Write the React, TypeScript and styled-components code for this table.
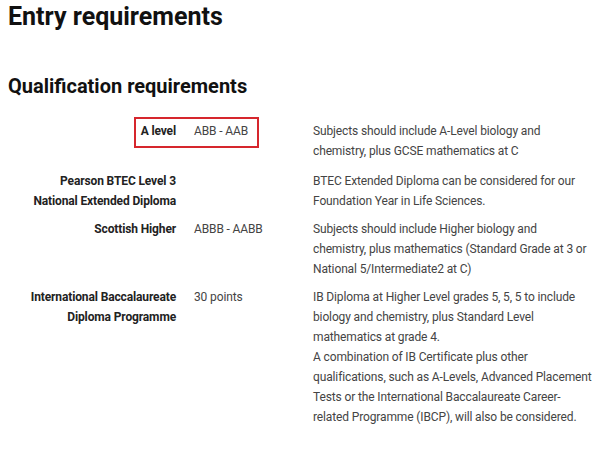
import React from "react";
import styled, { createGlobalStyle } from "styled-components";

const Global = createGlobalStyle`
  html, body { margin: 0; padding: 0; background: #fff; }
  body { font-family: Roboto, "Liberation Sans", Arial, sans-serif; color: #222; }
`;

const Page = styled.div`
  padding: 0 8px;
`;

const Title = styled.h1`
  margin: 0;
  padding-top: 3px;
  font-size: 25px;
  line-height: 28px;
  font-weight: 700;
  color: #111;
`;

const SubTitle = styled.h2`
  margin: 43px 0 0;
  font-size: 20px;
  line-height: 24px;
  font-weight: 700;
  color: #111;
`;

const Table = styled.div`
  margin-top: 23px;
  display: flex;
  flex-direction: column;
  gap: 8px;
  font-size: 12px;
  line-height: 20px;
  letter-spacing: -0.13px;
`;

const Row = styled.div<{ $extra?: boolean }>`
  position: relative;
  display: grid;
  grid-template-columns: 168px 101px 1fr;
  column-gap: 18px;
  margin-bottom: ${(p) => (p.$extra ? "2px" : "0")};
`;

const Label = styled.div`
  text-align: right;
  font-weight: 700;
  color: #222;
`;

const Value = styled.div`
  color: #444;
`;

const Desc = styled.div`
  color: #444;
`;

const Highlight = styled.span`
  position: absolute;
  left: 126px;
  top: -4px;
  width: 121px;
  height: 27px;
  border: 2px solid #d6262d;
  pointer-events: none;
`;

type Item = { label: string[]; value?: string; desc: React.ReactNode; highlight?: boolean };

const items: Item[] = [
  {
    label: ["A level"],
    value: "ABB - AAB",
    desc: "Subjects should include A-Level biology and chemistry, plus GCSE mathematics at C",
    highlight: true,
  },
  {
    label: ["Pearson BTEC Level 3", "National Extended Diploma"],
    desc: "BTEC Extended Diploma can be considered for our Foundation Year in Life Sciences.",
  },
  {
    label: ["Scottish Higher"],
    value: "ABBB - AABB",
    desc: "Subjects should include Higher biology and chemistry, plus mathematics (Standard Grade at 3 or National 5/Intermediate2 at C)",
  },
  {
    label: ["International Baccalaureate", "Diploma Programme"],
    value: "30 points",
    desc: (
      <>
        IB Diploma at Higher Level grades 5, 5, 5 to include biology and chemistry, plus Standard Level mathematics at grade 4.
        <br />
        A combination of IB Certificate plus other qualifications, such as A-Levels, Advanced Placement Tests or the International Baccalaureate Career-related Programme (IBCP), will also be considered.
      </>
    ),
  },
];

export default function App() {
  return (
    <>
      <Global />
      <Page>
        <Title>Entry requirements</Title>
        <SubTitle>Qualification requirements</SubTitle>
        <Table>
          {items.map((it, i) => (
            <Row key={i} $extra={i === 0}>
              {it.highlight && <Highlight />}
              <Label>
                {it.label.map((l, j) => (
                  <React.Fragment key={j}>
                    {j > 0 && <br />}
                    {l}
                  </React.Fragment>
                ))}
              </Label>
              <Value>{it.value}</Value>
              <Desc>{it.desc}</Desc>
            </Row>
          ))}
        </Table>
      </Page>
    </>
  );
}
